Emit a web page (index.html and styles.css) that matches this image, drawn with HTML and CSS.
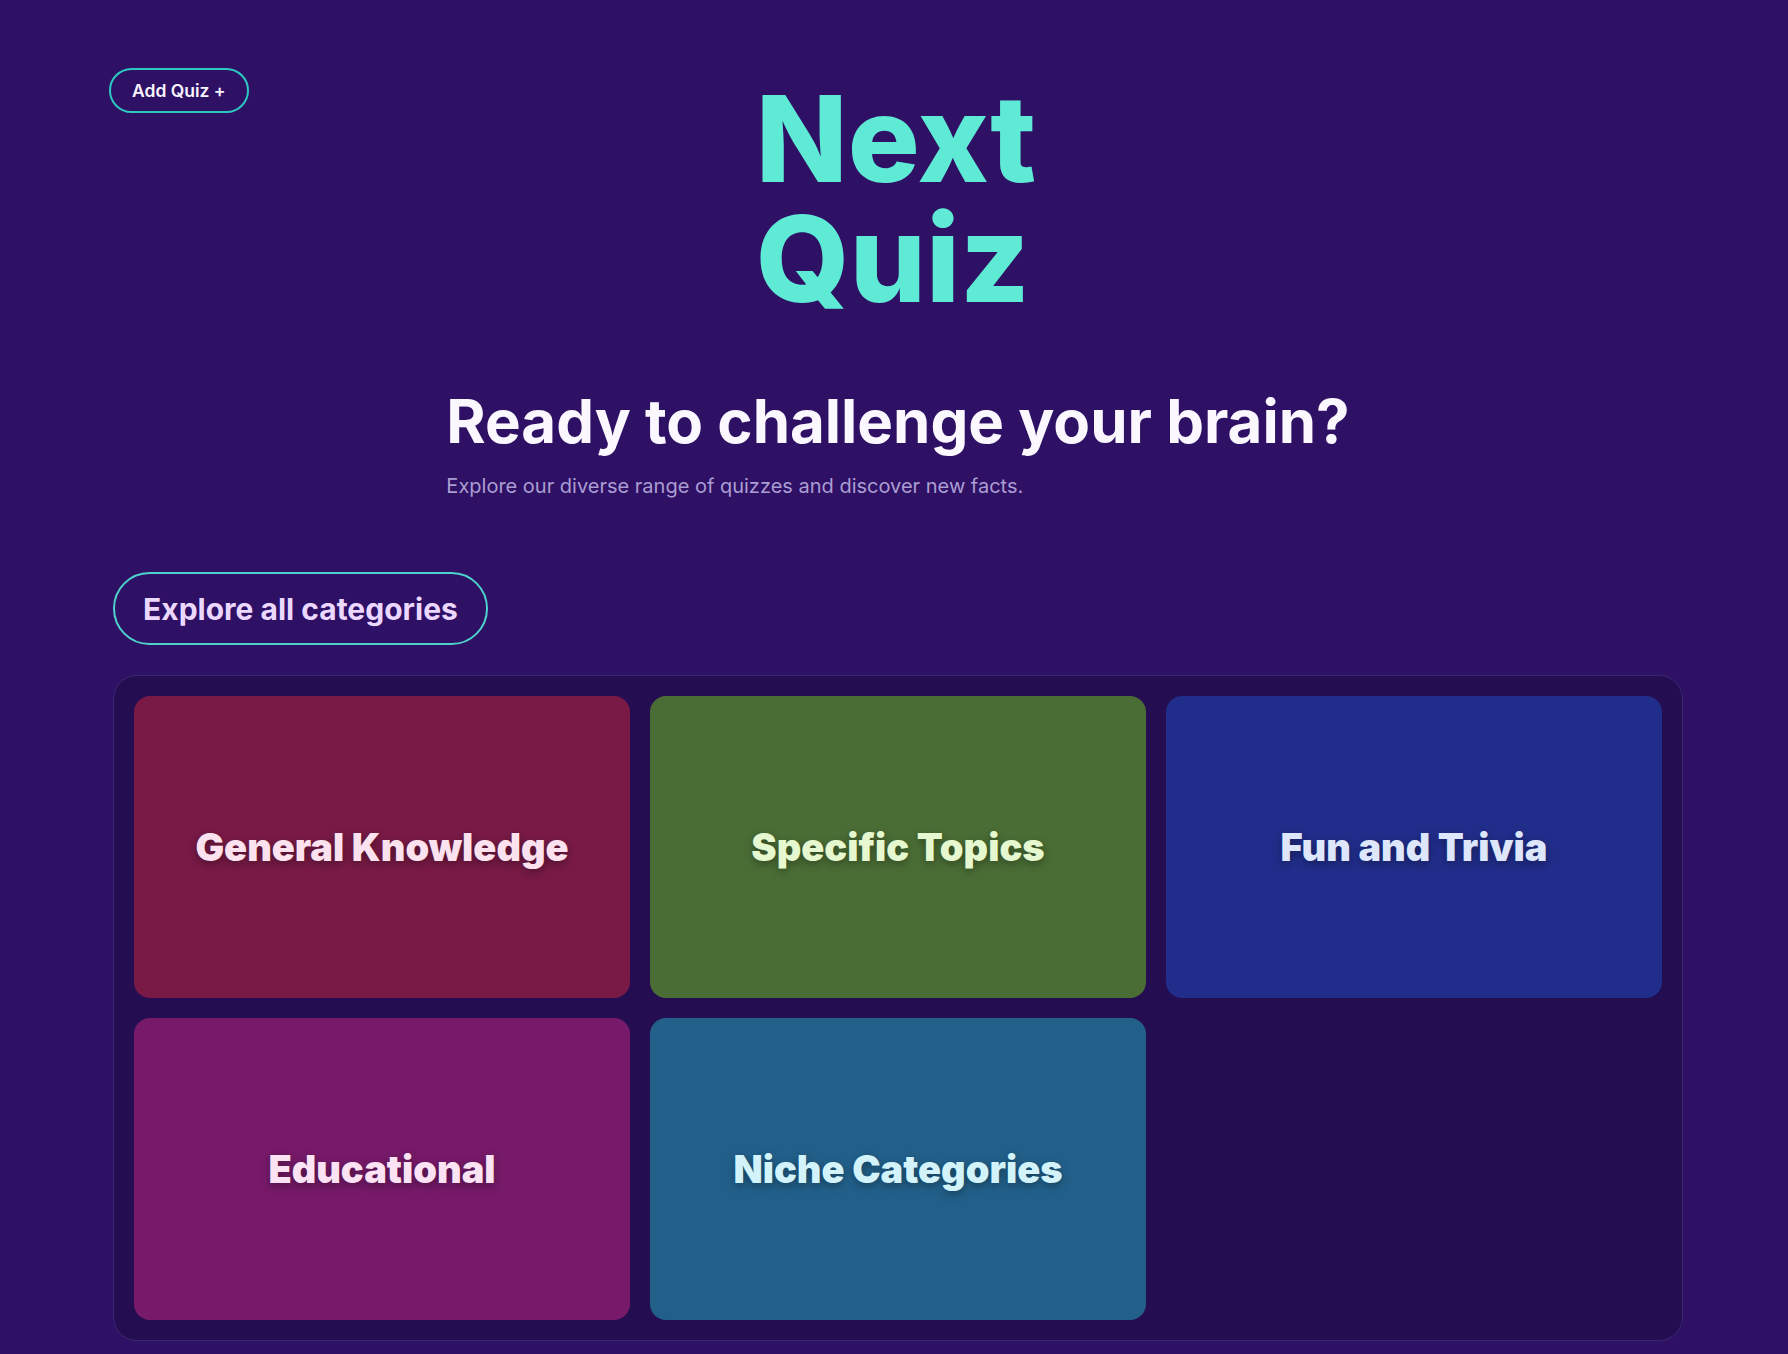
FILE: index.html
```html
<!DOCTYPE html>
<html lang="en">
<head>
<meta charset="utf-8">
<title>Next Quiz</title>
<link rel="stylesheet" href="styles.css">
</head>
<body>
<main class="page">
  <header class="top">
    <button class="add-btn">Add Quiz +</button>
    <h1 class="logo">Next<br>Quiz</h1>
    <div class="spacer"></div>
  </header>

  <section class="intro">
    <div class="intro-inner">
      <h2 class="headline">Ready to challenge your brain?</h2>
      <p class="sub">Explore our diverse range of quizzes and discover new facts.</p>
    </div>
  </section>

  <button class="explore-btn">Explore all categories</button>

  <section class="grid">
    <a class="card card-gk"><span>General Knowledge</span></a>
    <a class="card card-st"><span>Specific Topics</span></a>
    <a class="card card-ft"><span>Fun and Trivia</span></a>
    <a class="card card-ed"><span>Educational</span></a>
    <a class="card card-nc"><span>Niche Categories</span></a>
  </section>
</main>
</body>
</html>
```

FILE: styles.css
```css
* { box-sizing: border-box; }

html, body {
  margin: 0;
  padding: 0;
  background: #2e1065;
}

body {
  font-family: "Inter", "Noto Sans", sans-serif;
  color: #faf5ff;
  min-height: 1354px;
}

.page {
  padding: 68px 105px 0 113px;
  display: flex;
  flex-direction: column;
}

.top {
  display: grid;
  grid-template-columns: 1fr auto 1fr;
  align-items: start;
  margin-left: -4px;
}

.add-btn {
  justify-self: start;
  font-family: inherit;
  font-size: 17.5px;
  font-weight: 600;
  line-height: 25px;
  color: #f8f4ff;
  background: transparent;
  border: 2px solid #2cc7bf;
  border-radius: 999px;
  padding: 8px 21px;
  cursor: pointer;
}

.logo {
  margin: 11px 0 0 0;
  font-size: 120px;
  line-height: 1;
  font-weight: 800;
  letter-spacing: 0;
  color: #5eead4;
  text-align: left;
}

.intro {
  display: flex;
  justify-content: center;
  margin-top: 66px;
}

.intro-inner {
  display: flex;
  flex-direction: column;
}

.headline {
  margin: 0;
  font-size: 60px;
  line-height: 72px;
  font-weight: 700;
  color: #fbf7ff;
}

.sub {
  margin: 15px 0 0 0;
  font-size: 20px;
  line-height: 28px;
  color: #ab9ed3;
}

.explore-btn {
  align-self: flex-start;
  margin-top: 72px;
  font-family: inherit;
  font-size: 30px;
  font-weight: 700;
  line-height: 42px;
  color: #ecd8ff;
  background: transparent;
  border: 2px solid #4fd1cb;
  border-radius: 999px;
  padding: 13.5px 28px;
  cursor: pointer;
}

.grid {
  margin-top: 30px;
  display: grid;
  grid-template-columns: repeat(3, 1fr);
  grid-auto-rows: 302px;
  gap: 20px;
  padding: 20px;
  background: #250d52;
  border: 1px solid #3a2870;
  border-radius: 24px;
}

.card {
  display: flex;
  align-items: center;
  justify-content: center;
  border-radius: 16px;
  font-size: 38px;
  font-weight: 900;
  text-shadow: 0 3px 8px rgba(0, 0, 0, 0.35);
  cursor: pointer;
}

.card-gk { background: #781a45; color: #fbe2ee; }
.card-st { background: #4a6d35; color: #e6f8cf; }
.card-ft { background: #212d8a; color: #dde6fb; }
.card-ed { background: #771a69; color: #fbe3f4; }
.card-nc { background: #22608a; color: #d3f3fb; }
```
